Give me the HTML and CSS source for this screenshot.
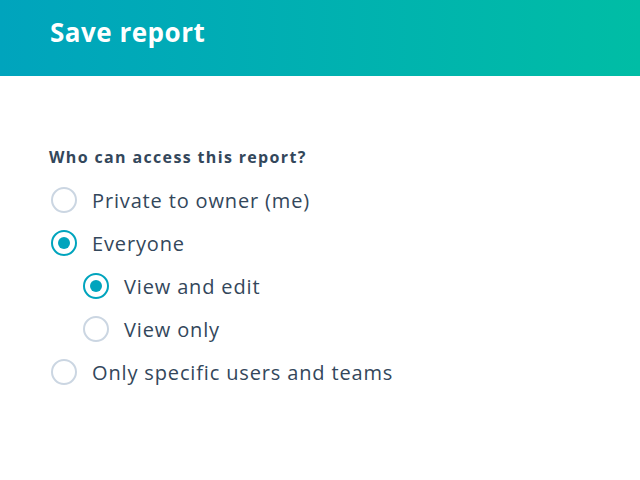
FILE: index.html
```html
<!DOCTYPE html>
<html>
<head>
<meta charset="utf-8">
<link rel="stylesheet" href="styles.css">
</head>
<body>
<header class="header">
  <h1 class="title">Save report</h1>
</header>
<main class="content">
  <h2 class="question">Who can access this report?</h2>
  <div class="options">
    <label class="option"><span class="radio"></span><span class="label">Private to owner (me)</span></label>
    <label class="option"><span class="radio checked"></span><span class="label">Everyone</span></label>
    <label class="option nested"><span class="radio checked"></span><span class="label">View and edit</span></label>
    <label class="option nested"><span class="radio"></span><span class="label">View only</span></label>
    <label class="option"><span class="radio"></span><span class="label">Only specific users and teams</span></label>
  </div>
</main>
</body>
</html>
```
FILE: styles.css
```css
html, body {
  margin: 0;
  padding: 0;
  background: #ffffff;
  font-family: "Open Sans", sans-serif;
  color: #33475b;
}
.header {
  height: 76px;
  background: linear-gradient(90deg, #00a4bd 0%, #00bda5 100%);
  display: flex;
  align-items: center;
  padding: 0 50px;
  box-sizing: border-box;
}
.title {
  margin: 0 0 12px 0;
  color: #ffffff;
  font-size: 26px;
  font-weight: 700;
  letter-spacing: 0.5px;
}
.content {
  padding: 71px 49px 0 49px;
}
.question {
  margin: 0 0 20px 0;
  font-size: 16px;
  font-weight: 700;
  line-height: 20px;
  letter-spacing: 1.35px;
}
.options {
  display: flex;
  flex-direction: column;
  gap: 17px;
}
.option {
  display: flex;
  align-items: center;
  gap: 15px;
  padding-left: 2px;
  height: 26px;
}
.option.nested {
  padding-left: 34px;
}
.radio {
  width: 26px;
  height: 26px;
  box-sizing: border-box;
  border: 2px solid #cbd6e2;
  border-radius: 50%;
  display: flex;
  align-items: center;
  justify-content: center;
  flex: none;
}
.radio.checked {
  border-color: #00a4bd;
}
.radio.checked::after {
  content: "";
  width: 12px;
  height: 12px;
  border-radius: 50%;
  background: #00a4bd;
}
.label {
  font-size: 20px;
  letter-spacing: 0.85px;
}
```
